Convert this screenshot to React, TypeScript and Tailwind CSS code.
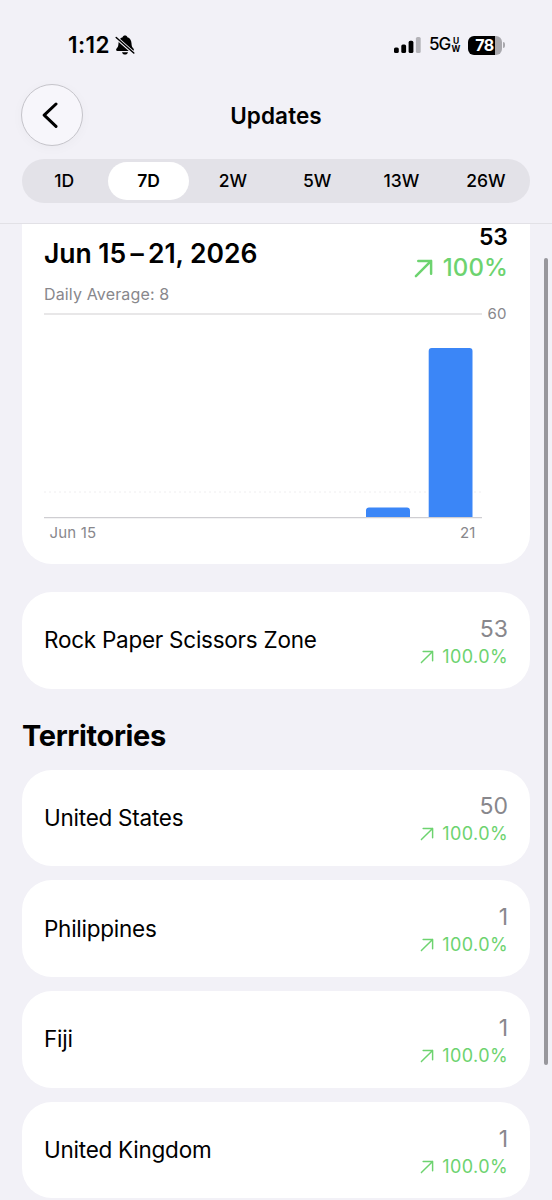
import React from 'react';

const ranges = ['1D', '7D', '2W', '5W', '13W', '26W'];

const territories = [
  { name: 'United States', count: 50 },
  { name: 'Philippines', count: 1 },
  { name: 'Fiji', count: 1 },
  { name: 'United Kingdom', count: 1 },
];

function TrendArrow({ className, strokeWidth }: { className: string; strokeWidth: number }) {
  return (
    <svg viewBox="0 0 20 20" className={className} fill="none" stroke="currentColor" strokeWidth={strokeWidth} strokeLinecap="round" strokeLinejoin="round">
      <path d="M2 18 18 2M4.5 2H18V15.5" />
    </svg>
  );
}

function StatusBar() {
  return (
    <div className="flex h-[84px] items-start justify-between pl-[68px] pr-[47px] pt-[33px]">
      <div className="flex h-6 items-center">
        <span className="w-[43px] whitespace-nowrap text-[22.5px] font-semibold tracking-[0.4px]">1:12</span>
        <svg viewBox="0 0 20 20" className="ml-1 h-5 w-5">
          <path d="M10 .6C8.7 .6 7.9 1.3 7.6 2.2C5 3 3.6 5.2 3.5 8.2C3.4 11 2.9 12 1.6 13.4C.8 14.2 .9 16 2.5 16H17.5C19.1 16 19.2 14.2 18.4 13.4C17.1 12 16.6 11 16.5 8.2C16.4 5.2 15 3 12.4 2.2C12.1 1.3 11.3 .6 10 .6ZM7 17.2H13C12.6 18.8 11.5 19.6 10 19.6C8.5 19.6 7.4 18.8 7 17.2Z" />
          <path d="M1 2.4 18.8 18.2" stroke="#f2f1f7" strokeWidth="3.4" />
          <path d="M1.2 2.5 18.8 18" stroke="#000" strokeWidth="1.5" strokeLinecap="round" />
        </svg>
      </div>
      <div className="flex h-6 items-center">
        <svg viewBox="0 0 27 16" className="h-4 w-[27px]">
          <rect x="0" y="10.5" width="4.8" height="5.5" rx="1.6" />
          <rect x="7.3" y="7.5" width="4.8" height="8.5" rx="1.6" />
          <rect x="14.6" y="3.8" width="4.8" height="12.2" rx="1.6" />
          <rect x="21.9" y="0" width="4.8" height="16" rx="1.6" fill="#b4b3b8" />
        </svg>
        <span className="ml-[8px] w-[23px] whitespace-nowrap text-[17px] font-medium tracking-[-1px]">5G</span>
        <span className="flex w-2 flex-col items-center text-[8.5px] font-bold leading-[8px]">
          <span>U</span>
          <span>W</span>
        </span>
        <div className="ml-[8px] flex h-[19px] w-[34px] items-center justify-center overflow-hidden rounded-[6px] bg-linear-to-r from-black from-78% to-[#a9a8ad] to-78% pr-[1px] text-[16px] font-bold tracking-[-0.5px] text-white">
          78
        </div>
        <div className="ml-[1px] h-[6px] w-[2px] rounded-r-full bg-[#a9a8ad]" />
      </div>
    </div>
  );
}

function Header() {
  return (
    <header className="h-[224px] border-b border-[#e2e1e6]">
      <StatusBar />
      <div className="grid h-[62px] grid-cols-[62px_1fr_62px] items-center px-[21px]">
        <button className="flex h-[62px] w-[62px] items-center justify-center rounded-full border border-[#c5c4ca] bg-[#f7f6fb] shadow-[0_2px_12px_rgba(0,0,0,0.03)]">
          <svg viewBox="0 0 16 26" className="mr-[4px] h-[26px] w-4" fill="none" stroke="#000" strokeWidth="3" strokeLinecap="round" strokeLinejoin="round">
            <path d="M14 2 2.2 13.2 14 24.4" />
          </svg>
        </button>
        <h1 className="pt-[2px] text-center text-[22.5px] font-semibold tracking-[0.1px]">Updates</h1>
      </div>
      <div className="mx-[22px] mt-[13px] grid h-[44px] grid-cols-6 rounded-full bg-[#e3e2e8] py-[2px] pr-[2px]">
        {ranges.map((range) => (
          <button
            key={range}
            className={
              range === '7D'
                ? 'mx-[2px] my-[1px] rounded-full bg-white text-[17.5px] font-semibold'
                : 'mx-[2px] my-[1px] text-[17.5px] font-[450]'
            }
          >
            {range}
          </button>
        ))}
      </div>
    </header>
  );
}

function UpdatesChart() {
  return (
    <svg viewBox="0 0 486 250" className="block h-[250px] w-[486px]">
      <path d="M0 12H438" stroke="#e0dfe1" strokeWidth="1.6" />
      <path d="M0 190H438" stroke="#efeef0" strokeWidth="1" strokeDasharray="2 3" />
      <path d="M322 215.5V208.5a3 3 0 0 1 3-3H363a3 3 0 0 1 3 3V215.5Z" fill="#3b86f7" />
      <path d="M384.7 215.5V49a3 3 0 0 1 3-3H425.5a3 3 0 0 1 3 3V215.5Z" fill="#3b86f7" />
      <path d="M0 215.7H438" stroke="#cfced2" strokeWidth="1.2" />
      <g fill="#88878c" fontSize="15" letterSpacing="0.2">
        <text x="443.5" y="17">60</text>
        <text x="5.5" y="236">Jun 15</text>
        <text x="416" y="236">21</text>
      </g>
    </svg>
  );
}

function SummaryCard() {
  return (
    <section className="h-[340px] rounded-b-[30px] bg-white px-[22px]">
      <div className="flex h-[78px] justify-between">
        <div className="pt-[12px]">
          <h2 className="whitespace-nowrap text-[26.5px] font-semibold leading-[34px] tracking-[-0.05px]">Jun 15{'\u2009'}–{'\u2009'}21, 2026</h2>
          <p className="mt-[12px] text-[16px] leading-6 tracking-[0.15px] text-[#88878c]">Daily Average: 8</p>
        </div>
        <div className="text-right">
          <p className="text-[23px] font-semibold leading-[27px]">53</p>
          <p className="flex items-center justify-end gap-[10px] text-[24px] font-medium leading-[34px] tracking-[0.1px] text-[#6dd36f]">
            <TrendArrow className="h-[19px] w-[19px]" strokeWidth={2.6} />
            100%
          </p>
        </div>
      </div>
      <UpdatesChart />
    </section>
  );
}

function CountCard({ name, count }: { name: string; count: number }) {
  return (
    <div className="flex h-[96.5px] items-center justify-between rounded-[30px] bg-white px-[22px]">
      <span className="text-[22.5px] tracking-[-0.25px]">{name}</span>
      <div className="pt-[4px] text-right">
        <p className="text-[23px] leading-[29px] text-[#88878c]">{count}</p>
        <p className="flex items-center justify-end gap-[8px] text-[18px] leading-[26px] tracking-[0.4px] text-[#6dd36f]">
          <TrendArrow className="h-[14px] w-[14px]" strokeWidth={2.1} />
          100.0%
        </p>
      </div>
    </div>
  );
}

export default function App() {
  return (
    <div className="relative h-[1200px] w-[552px] overflow-hidden bg-[#f2f1f7] font-['Inter',sans-serif] text-black">
      <Header />
      <main className="px-[22px]">
        <SummaryCard />
        <div className="mt-[28px]">
          <CountCard name="Rock Paper Scissors Zone" count={53} />
        </div>
        <h2 className="mt-[27px] text-[29px] font-bold leading-[40px] tracking-[-0.35px]">Territories</h2>
        <div className="mt-[14px] flex flex-col gap-[14.3px]">
          {territories.map((territory) => (
            <CountCard key={territory.name} name={territory.name} count={territory.count} />
          ))}
        </div>
      </main>
      {/* scroll indicator */}
      <div className="absolute right-[4px] top-[258px] h-[807px] w-[4px] rounded-full bg-[#98979c]" />
    </div>
  );
}
